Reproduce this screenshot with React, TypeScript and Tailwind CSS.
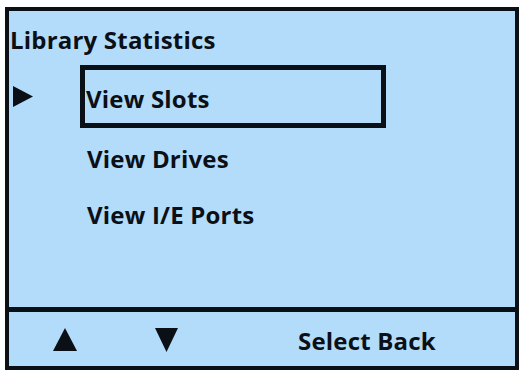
const TriRight = () => (
  <svg width="20" height="21" viewBox="0 0 20 21" className="block">
    <polygon points="0,0 20,10.5 0,21" fill="#0b0f16" />
  </svg>
);

const TriUp = () => (
  <svg width="24" height="23" viewBox="0 0 24 23" className="block">
    <polygon points="12,0 24,23 0,23" fill="#0b0f16" />
  </svg>
);

const TriDown = () => (
  <svg width="23" height="24" viewBox="0 0 23 24" className="block">
    <polygon points="0,0 23,0 11.5,24" fill="#0b0f16" />
  </svg>
);

export default function App() {
  const font = { fontFamily: '"Open Sans", Lato, sans-serif' };

  return (
    <div className="h-[371px] w-[520px] bg-white pt-[7px] pl-[5px]">
      <div
        className="flex h-[363px] w-[514px] flex-col border-4 border-[#0b0f16] bg-[#b3dcfb] text-[#0b0f16]"
        style={font}
      >
        <div className="flex h-[296px] flex-col">
          <div className="pt-[17px] pl-[1px] text-[24px] font-bold leading-[23px] tracking-[0.2px]">
            Library Statistics
          </div>

          <div className="mt-[14px] flex items-center">
            <div className="ml-[4px]">
              <TriRight />
            </div>
            <div className="ml-[47px] h-[63px] w-[306px] border-[5px] border-[#0b0f16] pt-[17px] pl-[1px] text-[24px] font-bold leading-[23px] tracking-[0.2px]">
              View Slots
            </div>
          </div>

          <div className="mt-[19px] pl-[78px] text-[24px] font-bold leading-[23px] tracking-[0.2px]">
            View Drives
          </div>
          <div className="mt-[33px] pl-[78px] text-[24px] font-bold leading-[23px] tracking-[0.2px]">
            View I/E Ports
          </div>
        </div>

        <div className="flex flex-1 items-start border-t-[5px] border-[#0b0f16]">
          <div className="mt-[16px] ml-[44px]">
            <TriUp />
          </div>
          <div className="mt-[16px] ml-[78px]">
            <TriDown />
          </div>
          <div className="mt-[17px] ml-[120px] text-[24px] font-bold leading-[23px] tracking-[0.2px]">
            Select Back
          </div>
        </div>
      </div>
    </div>
  );
}
